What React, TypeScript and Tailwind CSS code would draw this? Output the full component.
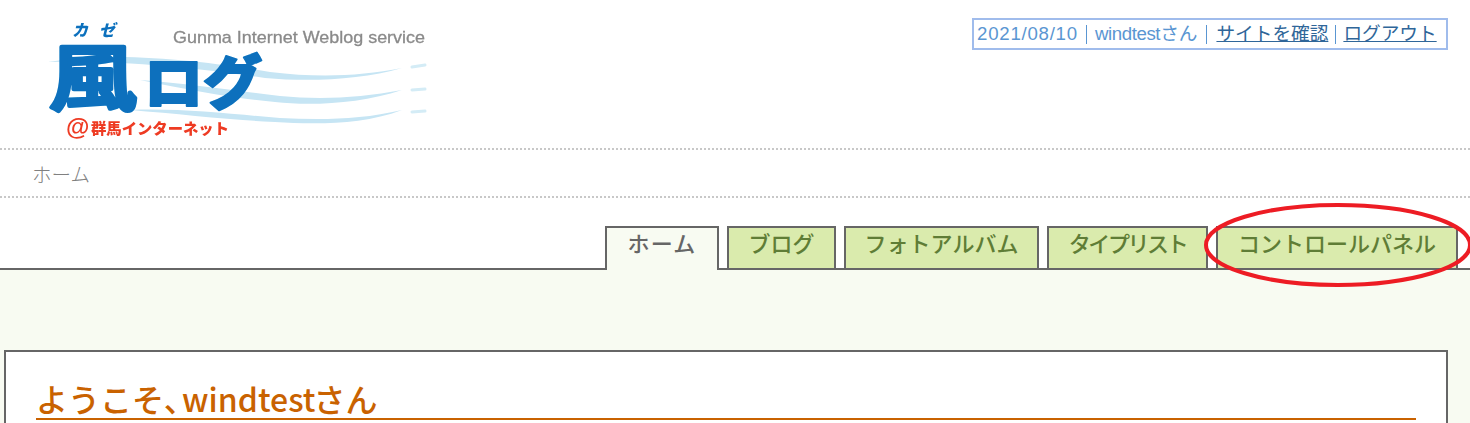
const font = "font-['Liberation_Sans','Noto_Sans_CJK_JP',sans-serif]";

const tabs = [
  { label: "ホーム", width: "w-[114px]", active: true, extra: "tracking-[1.3px]" },
  { label: "ブログ", width: "w-[109px]", active: false, extra: "" },
  { label: "フォトアルバム", width: "w-[195px]", active: false, extra: "" },
  { label: "タイプリスト", width: "w-[161px]", active: false, extra: "tracking-[-2.4px]" },
  { label: "コントロールパネル", width: "w-[242px]", active: false, extra: "" },
];

function Logo() {
  const cjk = "'Noto Sans CJK JP',sans-serif";
  return (
    <svg width="400" height="128" viewBox="0 0 400 128" className="ml-[40px] mt-[20px] block">
      <defs>
        <filter id="soft" x="-5%" y="-5%" width="110%" height="110%">
          <feGaussianBlur stdDeviation="0.5" />
        </filter>
      </defs>
      <g filter="url(#soft)">
        <g fill="#c6e5f4">
          <path d="M8 42 C80 30 170 42 230 52 C280 58 320 56 362 48 C320 60 270 62 225 58 C160 48 80 40 8 42Z" />
          <path d="M100 60 C150 64 190 70 240 76 C280 80 320 78 362 70 C320 84 270 86 235 82 C190 78 150 70 100 60Z" />
          <path d="M90 90 C140 88 190 94 240 98 C280 100 320 100 362 90 C320 106 270 104 235 102 C190 100 140 94 90 90Z" />
        </g>
        <path d="M372 47 L385 45 M372 70 L385 69 M372 92 L385 91" stroke="#d4ecf6" strokeWidth="3" strokeLinecap="round" fill="none" />
        <text x="133" y="23" fontSize="17" fill="#8a8a8a" fontWeight="400" stroke="#8a8a8a" strokeWidth="0.3" fontFamily="'Liberation Sans',sans-serif" textLength="252" lengthAdjust="spacingAndGlyphs">Gunma Internet Weblog service</text>
        <text x="32" y="16" fontSize="16" fontWeight="900" fontStyle="italic" fill="#0870bd" fontFamily={cjk} textLength="43">カゼ</text>
        <text x="9" y="84" fontSize="72" fontWeight="500" fill="#0870bd" fontFamily={cjk} stroke="#0870bd" strokeWidth="4" strokeLinejoin="round" textLength="88" lengthAdjust="spacingAndGlyphs">風</text>
        <text x="104" y="84" fontSize="58" fontWeight="900" fill="#0870bd" fontFamily={cjk} stroke="#0870bd" strokeWidth="2" strokeLinejoin="round" textLength="118" lengthAdjust="spacingAndGlyphs">ログ</text>
        <text x="26" y="115" fontSize="24" fontWeight="700" fill="#ee3a24" fontFamily="'Liberation Sans',sans-serif">@</text>
        <text x="51" y="114" fontSize="15" fontWeight="900" fill="#ee3a24" fontFamily={cjk} textLength="138" lengthAdjust="spacingAndGlyphs">群馬インターネット</text>
      </g>
    </svg>
  );
}

export default function App() {
  return (
    <div className={`${font} h-[423px] w-[1470px] overflow-hidden bg-white relative`}>
      <header className="h-[148px] flex justify-between">
        <Logo />
        <div className="mt-[18px] mr-[22px] h-[32px] w-[476px] border-2 border-[#a0bcec] flex items-center pl-[3px] text-[18.67px] leading-none text-[#5a96d2] whitespace-nowrap">
          <span className="tracking-[0.75px]">2021/08/10</span>
          <span className="mx-[8px] h-[19px] border-l border-[#5a96d2]" />
          <span>
            <span className="tracking-[-0.4px]">windtest</span>さん
          </span>
          <span className="mx-[9px] h-[19px] border-l border-[#5a96d2]" />
          <a className="text-[#2f6699] underline">サイトを確認</a>
          <span className="mx-[7px] h-[19px] border-l border-[#5a96d2]" />
          <a className="text-[#2f6699] underline">ログアウト</a>
        </div>
      </header>

      <nav className="h-[50px] pt-[5px] border-y-2 border-dotted border-[#c8c8c8] pl-[32px] flex items-center text-[19.5px] font-light text-[#808080]">
        ホーム
      </nav>

      <div className="h-[72px] pr-[12px] flex items-end justify-end gap-[8px] border-b-2 border-[#666]">
        {tabs.map((tab) => (
          <div
            key={tab.label}
            className={`${tab.width} border-2 border-b-0 border-[#666] text-center text-[22px] font-medium leading-[34px] ${tab.extra} ${
              tab.active
                ? "h-[44px] -mb-[2px] bg-[#f8fbf2] text-[#666]"
                : "h-[42px] bg-[#daebad] text-[#5f7d36]"
            }`}
          >
            {tab.label}
          </div>
        ))}
      </div>

      <main className="h-[153px] bg-[#f8fbf2] pt-[80px] pl-[4px] pr-[22px]">
        <section className="h-[120px] border-2 border-[#666] bg-white pt-[26px] px-[30px]">
          <h1 className="border-b-2 border-[#c96200] font-['Noto_Sans_CJK_JP',sans-serif] text-[32px] leading-[40px] font-medium text-[#c96200] whitespace-nowrap">
            ようこそ<span className="mr-[2px] [font-feature-settings:'palt']">、</span>windtest<span className="-ml-[2px]">さん</span>
          </h1>
        </section>
      </main>

      <svg width="270" height="90" viewBox="0 0 270 90" className="absolute left-[1203px] top-[200px] pointer-events-none">
        <ellipse cx="135" cy="45" rx="132" ry="40" fill="none" stroke="#ed1c24" strokeWidth="4" />
      </svg>
    </div>
  );
}
